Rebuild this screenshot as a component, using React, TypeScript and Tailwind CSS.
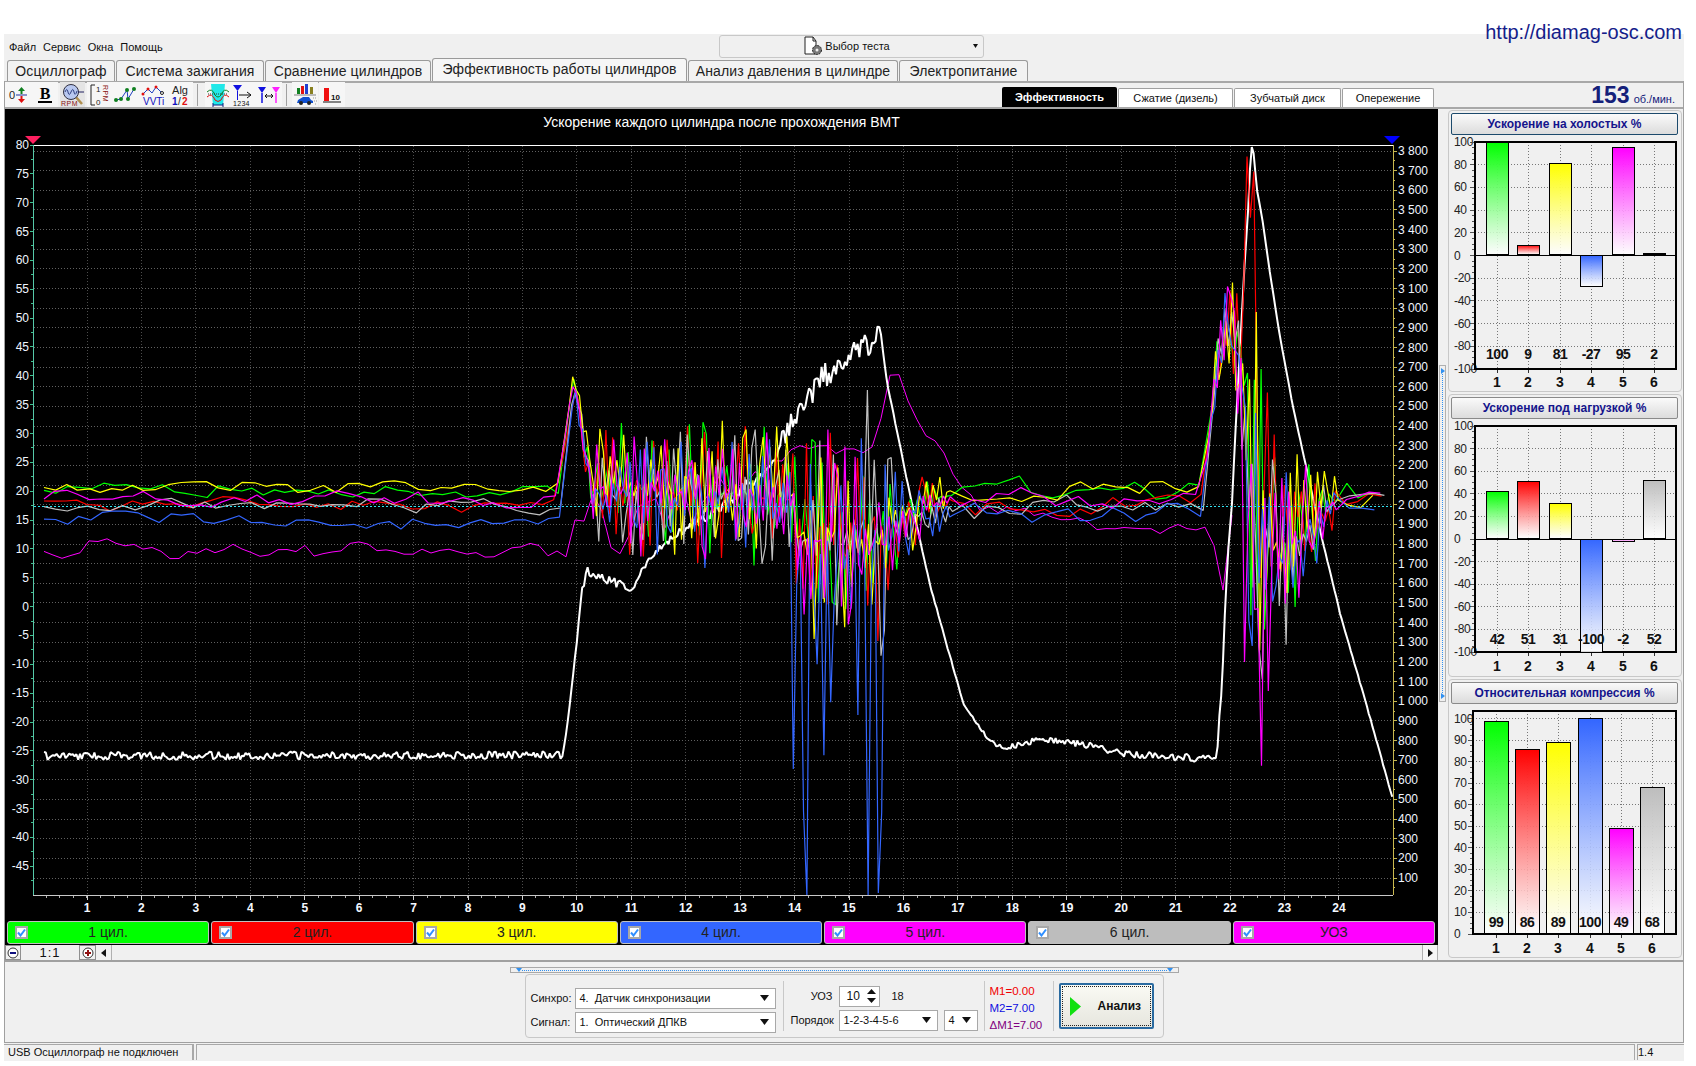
import React, { useMemo } from "react";

// small seeded random so the traces stay the same on every render
const makeRandom = (seed: number) => () => {
  seed |= 0;
  seed = (seed + 0x6d2b79f5) | 0;
  let t = Math.imul(seed ^ (seed >>> 15), 1 | seed);
  t = (t + Math.imul(t ^ (t >>> 7), 61 | t)) ^ t;
  return ((t ^ (t >>> 14)) >>> 0) / 4294967296;
};

type Pts = [number, number][];

const interp = (pts: Pts, x: number) => {
  if (x <= pts[0][0]) return pts[0][1];
  for (let i = 1; i < pts.length; i++) {
    if (x <= pts[i][0]) {
      const [x0, y0] = pts[i - 1];
      const [x1, y1] = pts[i];
      return y0 + ((y1 - y0) * (x - x0)) / (x1 - x0);
    }
  }
  return pts[pts.length - 1][1];
};

const toPoints = (list: Pts) => list.map(([x, y]) => `${x.toFixed(1)},${y.toFixed(1)}`).join(" ");

// main curve of the rpm trace, in page pixels
const whitePts: Pts = [
  [44, 756], [563, 755], [568, 720], [577, 640], [582, 590], [588, 570], [597, 577], [632, 588], [640, 573],
  [657, 550], [687, 527], [723, 507], [767, 467], [787, 430], [823, 377], [873, 340], [880, 328], [887, 383],
  [907, 480], [930, 585], [963, 703], [990, 741], [1006, 748], [1038, 739], [1082, 744], [1125, 754], [1211, 759],
  [1217, 758], [1219, 720], [1222, 687], [1225, 610], [1228, 553], [1232, 503], [1235, 440], [1245, 257], [1248, 213],
  [1251, 147], [1253, 147], [1257, 190], [1262, 217], [1270, 273], [1280, 337], [1293, 407], [1323, 543], [1340, 613],
  [1367, 707], [1393, 800],
];
const whiteAmp: Pts = [
  [44, 4], [560, 4], [570, 0], [590, 5], [640, 5], [720, 5], [760, 10], [870, 14], [882, 1], [960, 1], [1000, 3],
  [1210, 4], [1216, 0], [1393, 1],
];

const centerPts: Pts = [
  [44, 500], [560, 500], [567, 420], [574, 378], [582, 430], [592, 488], [790, 498], [800, 540], [880, 545],
  [900, 515], [950, 502], [1205, 497], [1212, 400], [1225, 325], [1240, 345], [1255, 500], [1275, 560], [1290, 540],
  [1320, 515], [1340, 495], [1385, 497],
];
const ampPts: Pts = [
  [44, 7], [560, 7], [565, 6], [575, 12], [592, 25], [600, 65], [790, 75], [800, 115], [880, 115], [900, 55], [950, 12],
  [1205, 9], [1212, 20], [1225, 48], [1240, 85], [1255, 200], [1275, 125], [1300, 75], [1330, 28], [1345, 12], [1385, 4],
];
const offsetWeight: Pts = [
  [560, 1], [575, 0.3], [900, 0.3], [950, 0.7], [1205, 0.8], [1215, 0.3], [1330, 0.4], [1385, 0.3],
];

const uozPts: Pts = [
  [44, 555], [70, 560], [100, 535], [160, 555], [230, 550], [300, 552], [360, 545], [420, 550], [500, 553], [540, 547],
  [563, 560], [573, 547], [577, 503], [590, 500], [610, 540], [640, 525], [700, 500], [760, 480], [790, 450], [830, 447],
  [877, 453], [887, 372], [900, 378], [920, 430], [937, 440], [957, 481], [975, 505], [1040, 512], [1100, 525], [1205, 530],
  [1218, 555], [1222, 597], [1228, 540], [1235, 490], [1240, 478],
];

const cylinders = [
  { stroke: "#00ff00", off: -10, seed: 11 },
  { stroke: "#ff0000", off: 6, seed: 29 },
  { stroke: "#c0c0c0", off: 8, seed: 47 },
  { stroke: "#ffff00", off: -13, seed: 83 },
  { stroke: "#3366ff", off: 21, seed: 101 },
  { stroke: "#ff00ff", off: -1, seed: 131 },
];

const buildWhite = () => {
  const r = makeRandom(7);
  const out: Pts = [];
  for (let x = 44; x <= 1393; x += 1.8) {
    const y = interp(whitePts, x) + (r() * 2 - 1) * interp(whiteAmp, x);
    out.push([x, Math.max(146, y)]);
  }
  return toPoints(out);
};

const buildCyl = (index: number) => {
  const c = cylinders[index];
  const r = makeRandom(c.seed);
  const out: Pts = [];
  let x = 44;
  let sign = 1;
  let drift = 0;
  while (x <= 1385) {
    const busy = (x > 565 && x < 950) || (x > 1205 && x < 1335);
    const amp = interp(ampPts, x);
    let y = interp(centerPts, x) + c.off * interp(offsetWeight, x);
    if (busy) {
      y += sign * Math.pow(r(), 1.7) * amp;
      if (r() > 0.18) sign = -sign;
    } else {
      drift = drift * 0.6 + (r() * 2 - 1) * amp * 0.7;
      y += drift + (r() * 2 - 1) * amp * 0.45;
    }
    if (c.stroke === "#3366ff") {
      if (x > 788 && x < 885 && r() > 0.55) y += r() * 280;
      if (x > 865 && x < 868.4) y = 895;
      if (x > 878 && x < 881.4) y = 893;
      if (x > 1246 && x < 1256 && r() > 0.5) y += r() * 320;
    }
    if (c.stroke === "#ff00ff" && x > 1240 && x < 1270 && r() > 0.4) y += r() * 280;
    if (c.stroke === "#c0c0c0") {
      if (x > 866 && x < 869.4) y = 390;
      if (x > 1240 && x < 1270 && r() > 0.5) y += r() * 220;
    }
    if (c.stroke === "#ff0000") {
      if (x > 1246 && x < 1254) y = 150 + r() * 70;
      if (x > 1255 && x < 1270 && r() > 0.4) y -= r() * 130;
    }
    out.push([x, Math.min(895, Math.max(147, y))]);
    x += busy ? 3.4 : 10 + r() * 3;
  }
  return toPoints(out);
};

const buildUoz = () => {
  const r = makeRandom(211);
  const out: Pts = [];
  for (let x = 44; x <= 1240; x += 9) {
    const noisy = x > 577 && x < 780 ? 22 : x > 880 && x < 960 ? 3 : 6;
    out.push([x, interp(uozPts, x) + (r() * 2 - 1) * noisy]);
  }
  return toPoints(out);
};

const leftTicks = Array.from({ length: 26 }, (_, i) => 80 - i * 5);
const rightTicks = Array.from({ length: 38 }, (_, i) => 3800 - i * 100);
const yLeft = (v: number) => 145 + (80 - v) * 5.77;
const yRight = (v: number) => 151 + ((3800 - v) / 100) * 19.65;
const xHour = (n: number) => 87 + (n - 1) * 54.43;
const rpmLabel = (v: number) => (v >= 1000 ? `${Math.floor(v / 1000)} ${String(v % 1000).padStart(3, "0")}` : `${v}`);

const ScopePlot = () => {
  const white = useMemo(buildWhite, []);
  const uoz = useMemo(buildUoz, []);
  const traces = useMemo(() => cylinders.map((_, i) => buildCyl(i)), []);
  const minorX = Array.from({ length: 96 }, (_, i) => 46 + i * 13.61);

  return (
    <svg width={1433} height={787} viewBox="5 133 1433 787" className="block">
      {/* grid */}
      {rightTicks.map((v) => (
        <line key={v} x1={34} x2={1392} y1={yRight(v)} y2={yRight(v)} stroke="#606060" strokeDasharray="1 2" shapeRendering="crispEdges" />
      ))}
      {Array.from({ length: 24 }, (_, i) => i + 1).map((n) => (
        <line key={n} x1={xHour(n)} x2={xHour(n)} y1={146} y2={894} stroke="#4c4c4c" strokeDasharray="1 2" shapeRendering="crispEdges" />
      ))}
      <line x1={33} x2={1393} y1={145} y2={145} stroke="#ffffff" shapeRendering="crispEdges" />
      <line x1={33} x2={1393} y1={895} y2={895} stroke="#c8c8c8" shapeRendering="crispEdges" />
      <line x1={33} x2={33} y1={145} y2={895} stroke="#55c8a8" shapeRendering="crispEdges" />
      <line x1={1393} x2={1393} y1={145} y2={895} stroke="#c8b850" shapeRendering="crispEdges" />

      {/* axes */}
      {leftTicks.map((v) => (
        <g key={v}>
          <line x1={30} x2={33} y1={yLeft(v)} y2={yLeft(v)} stroke="#40c090" shapeRendering="crispEdges" />
          <line x1={31} x2={33} y1={yLeft(v) + 14.4} y2={yLeft(v) + 14.4} stroke="#40c090" shapeRendering="crispEdges" />
          <text x={29} y={yLeft(v) + 4} fontSize={12} fill="#f0f6ff" textAnchor="end">{v}</text>
        </g>
      ))}
      {rightTicks.map((v) => (
        <g key={v}>
          <line x1={1393} x2={1397} y1={yRight(v)} y2={yRight(v)} stroke="#c8b850" shapeRendering="crispEdges" />
          <line x1={1393} x2={1395} y1={yRight(v) + 9.8} y2={yRight(v) + 9.8} stroke="#c8b850" shapeRendering="crispEdges" />
          <text x={1398} y={yRight(v) + 4} fontSize={12} fill="#f0f6ff">{rpmLabel(v)}</text>
        </g>
      ))}
      {minorX.map((x) => (
        <line key={x} x1={x} x2={x} y1={896} y2={898} stroke="#b0b0b0" shapeRendering="crispEdges" />
      ))}
      {Array.from({ length: 24 }, (_, i) => i + 1).map((n) => (
        <g key={n}>
          <line x1={xHour(n)} x2={xHour(n)} y1={896} y2={900} stroke="#d0d0d0" shapeRendering="crispEdges" />
          <text x={xHour(n)} y={912} fontSize={12} fontWeight={700} fill="#f4f8ff" textAnchor="middle">{n}</text>
        </g>
      ))}

      {/* traces */}
      <polyline points={uoz} fill="none" stroke="#ff00ff" strokeWidth={1} />
      <polyline points={white} fill="none" stroke="#ffffff" strokeWidth={2} strokeLinejoin="bevel" />
      {traces.map((points, i) => (
        <polyline key={i} points={points} fill="none" stroke={cylinders[i].stroke} strokeWidth={1.2} strokeLinejoin="bevel" />
      ))}
      <line x1={34} x2={1392} y1={506} y2={506} stroke="#30e0f0" strokeDasharray="2 2" shapeRendering="crispEdges" />

      {/* markers */}
      <polygon points="25,136 41,136 33,144" fill="#ff2060" />
      <polygon points="1384,136 1400,136 1392,144" fill="#0000ff" />
    </svg>
  );
};

type BarChartProps = {
  id: string;
  viewBox: string;
  w: number;
  h: number;
  top: number;
  bottom: number;
  left: number;
  right: number;
  max: number;
  min: number;
  step: number;
  xs: number[];
  barW: number;
  values: number[];
  colors: string[];
  valueY: number;
  labelY: number;
};

const chartColors = ["#00ff00", "#ff0000", "#ffff00", "#3366ff", "#ff00ff", "#bdbdbd"];
const xsA = [1497, 1528, 1560, 1591, 1623, 1654];
const xsB = [1496, 1527, 1558, 1590, 1621, 1652];

const BarChart = ({ id, viewBox, w, h, top, bottom, left, right, max, min, step, xs, barW, values, colors, valueY, labelY }: BarChartProps) => {
  const y = (v: number) => top + ((max - v) * (bottom - top)) / (max - min);
  const ticks: number[] = [];
  for (let v = 100; v >= min; v -= step) ticks.push(v);
  const minor: number[] = [];
  for (let v = 100; v >= min; v -= step / 4) minor.push(v);

  return (
    <svg width={w} height={h} viewBox={viewBox} className="block">
      <defs>
        {colors.map((c, i) => (
          <linearGradient key={i} id={`${id}-g${i}`} x1="0" x2="0" y1="0" y2="1">
            <stop offset="0%" stopColor={c} />
            <stop offset="100%" stopColor="#ffffff" stopOpacity={0.85} />
          </linearGradient>
        ))}
      </defs>
      {ticks.map((v) => (
        <g key={v}>
          <line x1={left} x2={right} y1={y(v)} y2={y(v)} stroke="#777777" strokeDasharray="1 2" shapeRendering="crispEdges" />
          <line x1={left - 5} x2={left} y1={y(v)} y2={y(v)} stroke="#555555" shapeRendering="crispEdges" />
          <text x={1454} y={y(v) + 4} fontSize={12} fill="#222222" letterSpacing={-0.3}>{v}</text>
        </g>
      ))}
      {minor.map((v) => (
        <line key={v} x1={left - 3} x2={left} y1={y(v)} y2={y(v)} stroke="#555555" shapeRendering="crispEdges" />
      ))}
      {xs.map((x) => (
        <g key={x}>
          <line x1={x} x2={x} y1={top} y2={bottom} stroke="#777777" strokeDasharray="1 2" shapeRendering="crispEdges" />
          <line x1={x} x2={x} y1={bottom} y2={bottom + 4} stroke="#333333" shapeRendering="crispEdges" />
        </g>
      ))}
      <rect x={left} y={top} width={right - left} height={bottom - top} fill="none" stroke="#000000" strokeWidth={2} shapeRendering="crispEdges" />
      {min < 0 && <line x1={left} x2={right} y1={y(0)} y2={y(0)} stroke="#000000" shapeRendering="crispEdges" />}
      {values.map((v, i) => {
        const yA = y(Math.max(v, 0));
        const yB = y(Math.min(v, 0));
        return (
          <rect
            key={i}
            x={xs[i] - barW / 2}
            y={yA}
            width={barW}
            height={Math.max(yB - yA - (v > 0 ? 1 : 0), 1)}
            fill={`url(#${id}-g${i})`}
            stroke="#000000"
            strokeWidth={1}
            shapeRendering="crispEdges"
          />
        );
      })}
      {values.map((v, i) => (
        <text key={i} x={xs[i]} y={valueY} fontSize={14} fontWeight={700} fill="#111111" textAnchor="middle" letterSpacing={-0.5}>{v}</text>
      ))}
      {xs.map((x, i) => (
        <text key={x} x={x} y={labelY} fontSize={14} fontWeight={700} fill="#111111" textAnchor="middle">{i + 1}</text>
      ))}
    </svg>
  );
};

const Panel = ({ title, focused, height, children }: { title: string; focused?: boolean; height: string; children: React.ReactNode }) => (
  <div className={`w-[234px] ${height} rounded-[4px] border border-[#c8c8c8] px-[2px] pt-[2px]`}>
    <div
      className={`flex h-[22px] w-[227px] items-center justify-center rounded-[2px] border bg-gradient-to-b from-[#fafafa] to-[#dcdcdc] text-[12px] font-bold text-[#14148c] ${
        focused ? "border-[#1c4a6c]" : "border-[#8a8a8a]"
      }`}
    >
      {title}
    </div>
    {children}
  </div>
);

const Caret = () => (
  <svg width="9" height="6" viewBox="0 0 9 6" className="shrink-0">
    <polygon points="0,0 9,0 4.5,6" fill="#111111" />
  </svg>
);

const Combo = ({ text, className }: { text: string; className: string }) => (
  <div className={`flex items-center justify-between border border-[#a8a8a8] bg-white pl-[4px] pr-[6px] text-[11px] text-[#111] ${className}`}>
    <span className="whitespace-pre">{text}</span>
    <Caret />
  </div>
);

const Check = () => (
  <div className="flex h-[13px] w-[13px] items-center justify-center border-2 border-[#a8a8a8] bg-white">
    <svg width="9" height="9" viewBox="0 0 9 9">
      <path d="M1 4.5 L3.5 7.5 L8 1.5" fill="none" stroke="#2f8fff" strokeWidth="2" />
    </svg>
  </div>
);

const ToolBtn = ({ w, children, pressed }: { w: string; children: React.ReactNode; pressed?: boolean }) => (
  <div className={`flex h-[25px] items-center justify-center ${w} ${pressed ? "bg-[#e4e4e4]" : "bg-[#f6f6f6]"}`}>{children}</div>
);

const ToolSep = () => <div className="mx-[4px] h-[22px] w-px bg-[#a0a0a0]" />;

const Toolbar = () => (
  <div className="flex items-center">
    <ToolBtn w="w-[26px]">
      <svg width="22" height="20" viewBox="0 0 22 20">
        <text x="2" y="14" fontSize="11" fill="#222">0</text>
        <line x1="9" x2="20" y1="10" y2="10" stroke="#2030a0" />
        <path d="M14.5 2 L18 6 L15.5 6 L15.5 9 L13.5 9 L13.5 6 L11 6 Z" fill="#108020" />
        <path d="M14.5 18 L18 14 L15.5 14 L15.5 11 L13.5 11 L13.5 14 L11 14 Z" fill="#e01010" />
      </svg>
    </ToolBtn>
    <ToolBtn w="w-[27px]">
      <svg width="20" height="20" viewBox="0 0 20 20">
        <text x="10" y="14" fontSize="16" fontWeight="700" fill="#000" textAnchor="middle" fontFamily="Liberation Serif">B</text>
        <rect x="3" y="16" width="14" height="2" fill="#000" />
      </svg>
    </ToolBtn>
    <div className="w-[2px]" />
    <ToolBtn w="w-[25px]" pressed>
      <svg width="25" height="25" viewBox="0 0 25 25">
        <line x1="15" y1="14" x2="22" y2="22" stroke="#b09050" strokeWidth="2.5" />
        <circle cx="11" cy="10" r="7.5" fill="#b8c8f0" stroke="#303040" />
        <path d="M5 10 Q7 5 8 10 T11 10 T14 10 T17 9" fill="none" stroke="#304080" />
        <line x1="18" y1="10" x2="24" y2="10" stroke="#202060" />
        <text x="1" y="24" fontSize="7" fill="#8a1010" letterSpacing="0.5">RPM</text>
      </svg>
    </ToolBtn>
    <div className="w-[2px]" />
    <ToolBtn w="w-[25px]">
      <svg width="22" height="24" viewBox="0 0 22 24">
        <path d="M6 2 H2 V22 H6" fill="none" stroke="#222" />
        <text x="7" y="9" fontSize="8" fill="#222">1</text>
        <text x="7" y="22" fontSize="8" fill="#222">0</text>
        <text x="0" y="0" fontSize="7" fill="#8a1010" transform="translate(14,2) rotate(90)" letterSpacing="0.5">RPM</text>
      </svg>
    </ToolBtn>
    <ToolBtn w="w-[26px]">
      <svg width="24" height="20" viewBox="0 0 24 20">
        <path d="M3 15 L8 14 L14 5 L15 14 L21 4" fill="none" stroke="#2040c0" />
        <circle cx="3" cy="15" r="2" fill="#108020" />
        <circle cx="8" cy="14" r="2" fill="#108020" />
        <circle cx="14" cy="5" r="2" fill="#108020" />
        <circle cx="15" cy="14" r="2" fill="#108020" />
        <circle cx="21" cy="4" r="2" fill="#108020" />
      </svg>
    </ToolBtn>
    <ToolBtn w="w-[29px]">
      <svg width="24" height="24" viewBox="0 0 24 24">
        <path d="M2 11 L7 6 L11 10 L15 4 L20 9" fill="none" stroke="#2040c0" />
        <circle cx="2" cy="11" r="1.5" fill="#e01010" />
        <circle cx="7" cy="6" r="1.5" fill="#e01010" />
        <circle cx="15" cy="4" r="1.5" fill="#e01010" />
        <circle cx="21" cy="10" r="1.5" fill="none" stroke="#222" />
        <text x="2" y="22" fontSize="10" fill="#1010c0">VVTi</text>
      </svg>
    </ToolBtn>
    <ToolBtn w="w-[26px]">
      <svg width="20" height="24" viewBox="0 0 20 24">
        <text x="10" y="11" fontSize="11" fill="#222" textAnchor="middle">Alg</text>
        <text x="2" y="22" fontSize="10" fontWeight="700" fill="#1010c0">1</text>
        <text x="8" y="22" fontSize="10" fill="#222">/</text>
        <text x="12" y="22" fontSize="10" fontWeight="700" fill="#e01010">2</text>
      </svg>
    </ToolBtn>
    <ToolSep />
    <div className="w-[3px]" />
    <ToolBtn w="w-[25px]">
      <svg width="24" height="24" viewBox="0 0 24 24">
        <polygon points="5,1 19,1 17,22 7,22" fill="#20e8e8" />
        <path d="M1 9 Q6 4 9 12 Q12 16 15 12 Q18 4 23 9" fill="none" stroke="#108020" />
        <path d="M1 14 Q6 9 9 17 Q12 20 15 17 Q18 9 23 14" fill="none" stroke="#e01010" />
        <line x1="2" x2="22" y1="11" y2="11" stroke="#333" strokeDasharray="1 1" />
        <path d="M7 22 H17 M7 20 V24 M17 20 V24" stroke="#102080" fill="none" />
      </svg>
    </ToolBtn>
    <ToolBtn w="w-[25px]">
      <svg width="22" height="24" viewBox="0 0 22 24">
        <polygon points="1,2 10,2 5.5,8" fill="#1010e0" />
        <line x1="5.5" x2="5.5" y1="8" y2="17" stroke="#1010e0" />
        <path d="M7 12 H19 M15 9 L19 12 L15 15" fill="none" stroke="#111" />
        <text x="1" y="23" fontSize="7" fill="#111" letterSpacing="0.3">1234</text>
      </svg>
    </ToolBtn>
    <ToolBtn w="w-[27px]">
      <svg width="22" height="22" viewBox="0 0 22 22">
        <polygon points="0,3 8,3 4,9" fill="#1010e0" />
        <line x1="4" x2="4" y1="9" y2="19" stroke="#1010e0" strokeWidth="1.5" />
        <polygon points="14,3 22,3 18,9" fill="#ff20ff" />
        <line x1="18" x2="18" y1="9" y2="19" stroke="#ff20ff" strokeWidth="1.5" />
        <path d="M7 12 H15 M9 10 L7 12 L9 14 M13 10 L15 12 L13 14" fill="none" stroke="#111" />
      </svg>
    </ToolBtn>
    <ToolSep />
    <div className="w-[1px]" />
    <ToolBtn w="w-[26px]">
      <svg width="24" height="24" viewBox="0 0 24 24">
        <rect x="4" y="5" width="3" height="6" fill="#108020" />
        <rect x="8" y="3" width="3" height="8" fill="#e01010" />
        <rect x="12" y="1" width="3" height="10" fill="#2040d0" />
        <rect x="17" y="4" width="3" height="7" fill="#888020" />
        <line x1="1" x2="23" y1="12" y2="12" stroke="#808080" />
        <path d="M4 20 L5 17 L10 14 L16 14 L18 17 L20 18 L20 20 Z" fill="#1050d0" />
        <circle cx="8" cy="20" r="2" fill="#222" />
        <circle cx="16" cy="20" r="2" fill="#222" />
        <path d="M20 15 H24 M21 18 H24 M22 21 H24" stroke="#999" strokeDasharray="1 1" />
      </svg>
    </ToolBtn>
    <div className="w-[1px]" />
    <ToolBtn w="w-[26px]">
      <svg width="20" height="22" viewBox="0 0 20 22">
        <rect x="2" y="4" width="5" height="13" fill="#f01010" />
        <text x="9" y="16" fontSize="8" fontWeight="700" fill="#111">10</text>
        <line x1="1" x2="19" y1="18" y2="18" stroke="#111" />
      </svg>
    </ToolBtn>
  </div>
);

const legend = [
  { name: "1 цил.", bg: "bg-[#00ff00]" },
  { name: "2 цил.", bg: "bg-[#ff0000]" },
  { name: "3 цил.", bg: "bg-[#ffff00]" },
  { name: "4 цил.", bg: "bg-[#3366ff]" },
  { name: "5 цил.", bg: "bg-[#ff00ff]" },
  { name: "6 цил.", bg: "bg-[#bdbdbd]" },
  { name: "УОЗ", bg: "bg-[#ff00ff]" },
];

const tabs = [
  { label: "Осциллограф", w: "w-[108px]" },
  { label: "Система зажигания", w: "w-[148px]" },
  { label: "Сравнение цилиндров", w: "w-[166px]" },
  { label: "Эффективность работы цилиндров", w: "w-[255px]", active: true },
  { label: "Анализ давления в цилиндре", w: "w-[210px]" },
  { label: "Электропитание", w: "w-[129px]" },
];

const subTabs = [
  { label: "Сжатие (дизель)", w: "w-[115px]" },
  { label: "Зубчатый диск", w: "w-[107px]" },
  { label: "Опережение", w: "w-[92px]" },
];

export default function App() {
  return (
    <div className="relative h-[1066px] w-[1696px] overflow-hidden bg-white pl-[4px] pt-[34px] font-['Liberation_Sans',Arial,sans-serif] text-[#111]">
      <a className="absolute right-[14px] top-[20px] text-[20px] leading-[24px] text-[#14208a]">http://diamag-osc.com</a>

      <div className="h-[1027px] w-[1680px] bg-[#f0f0f0]">
        {/* menu line */}
        <div className="flex h-[24px] items-center">
          <div className="flex w-[715px] gap-[7px] pl-[5px] pt-[3px] text-[11px]">
            <span>Файл</span>
            <span>Сервис</span>
            <span>Окна</span>
            <span>Помощь</span>
          </div>
          <div className="flex h-[23px] w-[265px] items-center rounded-[3px] border border-[#c8c8c8] pr-[5px]">
            <div className="flex flex-1 items-center justify-center gap-[2px] text-[11px]">
              <svg width="20" height="20" viewBox="0 0 20 20">
                <path d="M2 1 H10 L13 5 V18 H2 Z M10 1 V5 H13" fill="#fff" stroke="#222" />
                <circle cx="14" cy="14" r="4.5" fill="#777" stroke="#222" strokeDasharray="2 1" />
                <circle cx="14" cy="14" r="1.5" fill="#eee" />
              </svg>
              <span>Выбор теста</span>
            </div>
            <svg width="5" height="4" viewBox="0 0 5 4">
              <polygon points="0,0 5,0 2.5,4" fill="#111" />
            </svg>
          </div>
        </div>

        {/* tabs */}
        <div className="flex h-[23px] items-end gap-[1px] pl-[3px]">
          {tabs.map((t) => (
            <div
              key={t.label}
              className={`flex items-center justify-center rounded-t-[3px] border border-b-0 border-[#9a9a9a] text-[14px] tracking-[0.1px] text-[#222] ${t.w} ${
                t.active ? "h-[23px] bg-[#f6f6f6] pb-[1px]" : "h-[21px] bg-[#f2f2f2]"
              }`}
            >
              {t.label}
            </div>
          ))}
        </div>

        <div className="border-x border-b border-[#a0a0a0]">
          {/* toolbar */}
          <div className="flex h-[28px] items-end justify-between border-y-2 border-b-[#a8a8a8] border-t-[#a8a8a8]">
            <Toolbar />
            <div className="flex items-end pl-[657px]">
              <div className="flex h-[20px] w-[115px] items-center justify-center rounded-t-[2px] bg-black text-[11px] font-bold text-white">Эффективность</div>
              {subTabs.map((t) => (
                <div
                  key={t.label}
                  className={`ml-[1px] flex h-[19px] items-center justify-center rounded-t-[2px] border border-b-0 border-[#a0a0a0] bg-white text-[11px] ${t.w}`}
                >
                  {t.label}
                </div>
              ))}
            </div>
            <div className="flex flex-1 items-baseline justify-end pr-[8px] text-[#14207a]">
              <span className="text-[23px] font-bold leading-[24px]">153</span>
              <span className="ml-[4px] text-[11px] leading-[14px]">об./мин.</span>
            </div>
          </div>

          {/* scope + bar charts */}
          <div className="flex">
            <div className="w-[1433px]">
              <div className="bg-black pt-px">
                <div className="flex h-[23px] items-center justify-center pt-[2px] text-[14px] text-white">
                  Ускорение каждого цилиндра после прохождения ВМТ
                </div>
                <ScopePlot />
                <div className="grid h-[25px] grid-cols-7 gap-[2px] pl-[2px] pr-[3px] pt-px">
                  {legend.map((l) => (
                    <div
                      key={l.name}
                      className={`grid h-[23px] grid-cols-[22px_1fr_22px] items-center rounded-[3px] border border-[#c0c0c0] text-[14px] text-[#222] ${l.bg}`}
                    >
                      <div className="pl-[7px]">
                        <Check />
                      </div>
                      <div className="text-center">{l.name}</div>
                    </div>
                  ))}
                </div>
              </div>
              {/* zoom and scroll line */}
              <div className="flex h-[15px] items-stretch text-[13px]">
                <div className="flex w-[16px] items-center justify-center border border-[#909090]">
                  <svg width="12" height="12" viewBox="0 0 12 12">
                    <circle cx="6" cy="6" r="5" fill="#fff" stroke="#333" />
                    <rect x="3" y="5" width="6" height="2" fill="#101080" />
                  </svg>
                </div>
                <div className="flex w-[58px] items-center justify-center tracking-[1px]">1:1</div>
                <div className="flex w-[17px] items-center justify-center border border-[#909090]">
                  <svg width="12" height="12" viewBox="0 0 12 12">
                    <circle cx="6" cy="6" r="5" fill="#fff" stroke="#333" />
                    <path d="M3 6 H9 M6 3 V9" stroke="#901010" strokeWidth="2" />
                  </svg>
                </div>
                <div className="flex w-[16px] items-center justify-center border-r border-[#b0b0b0]">
                  <svg width="5" height="8" viewBox="0 0 5 8">
                    <polygon points="5,0 5,8 0,4" fill="#111" />
                  </svg>
                </div>
                <div className="flex-1" />
                <div className="flex w-[16px] items-center justify-center border-x border-[#b0b0b0] bg-[#f6f6f6]">
                  <svg width="5" height="8" viewBox="0 0 5 8">
                    <polygon points="0,0 0,8 5,4" fill="#111" />
                  </svg>
                </div>
              </div>
            </div>

            {/* collapse handle */}
            <div className="w-[10px] pl-[1px] pt-[256px]">
              <div className="flex h-[337px] w-[7px] flex-col items-center justify-between border border-[#b0b0b0] py-[2px]">
                <svg width="4" height="6" viewBox="0 0 4 6">
                  <polygon points="0,0 4,3 0,6" fill="#3090f0" />
                </svg>
                <div className="w-px flex-1 border-l border-dotted border-[#3090f0]" />
                <svg width="4" height="6" viewBox="0 0 4 6">
                  <polygon points="0,0 4,3 0,6" fill="#3090f0" />
                </svg>
              </div>
            </div>

            <div className="flex flex-col gap-[2px] pt-[1px]">
              <Panel title="Ускорение на холостых %" focused height="h-[282px]">
                <BarChart
                  id="idle"
                  viewBox="1451 135 228 256"
                  w={228}
                  h={256}
                  top={142}
                  bottom={369}
                  left={1475}
                  right={1676}
                  max={100}
                  min={-100}
                  step={20}
                  xs={xsA}
                  barW={22}
                  values={[100, 9, 81, -27, 95, 2]}
                  colors={chartColors}
                  valueY={359}
                  labelY={387}
                />
              </Panel>
              <Panel title="Ускорение под нагрузкой %" height="h-[283px]">
                <BarChart
                  id="load"
                  viewBox="1451 419 228 257"
                  w={228}
                  h={257}
                  top={426}
                  bottom={652}
                  left={1475}
                  right={1676}
                  max={100}
                  min={-100}
                  step={20}
                  xs={xsA}
                  barW={22}
                  values={[42, 51, 31, -100, -2, 52]}
                  colors={chartColors}
                  valueY={644}
                  labelY={671}
                />
              </Panel>
              <Panel title="Относительная компрессия %" height="h-[279px]">
                <BarChart
                  id="comp"
                  viewBox="1451 704 228 253"
                  w={228}
                  h={253}
                  top={711}
                  bottom={934}
                  left={1473}
                  right={1676}
                  max={103.7}
                  min={0}
                  step={10}
                  xs={xsB}
                  barW={24}
                  values={[99, 86, 89, 100, 49, 68]}
                  colors={chartColors}
                  valueY={927}
                  labelY={953}
                />
              </Panel>
            </div>
          </div>

          <div className="h-[2px] bg-[#a0a0a0]" />

          {/* analysis controls */}
          <div className="flex h-[80px] flex-col items-center pt-[5px]">
            <div className="flex h-[6px] w-[669px] items-center justify-between border border-[#a8a8a8] px-[5px]">
              <svg width="6" height="4" viewBox="0 0 6 4">
                <polygon points="0,0 6,0 3,4" fill="#3090f0" />
              </svg>
              <div className="h-px flex-1 border-t border-dotted border-[#3090f0]" />
              <svg width="6" height="4" viewBox="0 0 6 4">
                <polygon points="0,0 6,0 3,4" fill="#3090f0" />
              </svg>
            </div>
            <div className="mt-px flex h-[64px] w-[639px] items-center rounded-[4px] border border-[#c8c8c8] pl-[5px] text-[11px]">
              <div className="mt-[8px] flex w-[250px] flex-col gap-[3px]">
                <div className="flex items-center">
                  <span className="w-[44px]">Синхро:</span>
                  <Combo text="4.  Датчик синхронизации" className="h-[21px] w-[201px]" />
                </div>
                <div className="flex items-center">
                  <span className="w-[44px]">Сигнал:</span>
                  <Combo text="1.  Оптический ДПКВ" className="h-[21px] w-[201px]" />
                </div>
              </div>
              <div className="ml-[2px] h-[50px] w-px bg-[#c8c8c8]" />
              <div className="mt-[4px] flex w-[200px] flex-col gap-[3px] pl-[7px]">
                <div className="flex items-center">
                  <span className="w-[42px] text-right">УОЗ</span>
                  <div className="ml-[6px] flex h-[21px] w-[41px] items-center justify-between border border-[#a8a8a8] bg-white pl-[7px] pr-[3px] text-[12px]">
                    <span>10</span>
                    <svg width="9" height="14" viewBox="0 0 9 14">
                      <polygon points="4.5,0 9,5 0,5" fill="#111" />
                      <polygon points="4.5,14 9,9 0,9" fill="#111" />
                    </svg>
                  </div>
                  <span className="ml-[12px]">18</span>
                </div>
                <div className="flex items-center">
                  <span className="w-[42px] whitespace-nowrap text-right">Порядок</span>
                  <Combo text="1-2-3-4-5-6" className="ml-[6px] h-[21px] w-[99px]" />
                  <Combo text="4" className="ml-[6px] h-[21px] w-[34px]" />
                </div>
              </div>
              <div className="h-[50px] w-px bg-[#c8c8c8]" />
              <div className="mt-[3px] flex w-[68px] flex-col gap-[3px] pl-[5px] text-[11.5px] leading-[14px]">
                <span className="text-[#f00000]">M1=0.00</span>
                <span className="text-[#1010e0]">M2=7.00</span>
                <span className="text-[#800080]">ΔM1=7.00</span>
              </div>
              <div className="h-[50px] w-px bg-[#c8c8c8]" />
              <div className="ml-[5px] flex h-[46px] w-[95px] items-center rounded-[2px] border-2 border-[#2a6aa0] bg-gradient-to-b from-[#fafaf4] to-[#e6e6de] p-px">
                <div className="flex h-full w-full items-center border border-dotted border-[#222] pl-[7px]">
                  <svg width="11" height="19" viewBox="0 0 11 19">
                    <polygon points="0,0 11,9.5 0,19" fill="#10e010" />
                  </svg>
                  <span className="ml-[17px] text-[12px] font-bold">Анализ</span>
                </div>
              </div>
            </div>
          </div>
        </div>

        {/* status bar */}
        <div className="mt-[1px] flex h-[16px] text-[11px] leading-[15px]">
          <div className="w-[190px] whitespace-nowrap border-r-2 border-t border-[#a8a8a8] pl-[4px]">USB Осциллограф не подключен</div>
          <div className="ml-[2px] flex-1 border-x border-t border-[#a8a8a8]" />
          <div className="ml-[2px] w-[47px] border-l border-t border-[#a8a8a8]">1.4</div>
        </div>
      </div>
    </div>
  );
}
